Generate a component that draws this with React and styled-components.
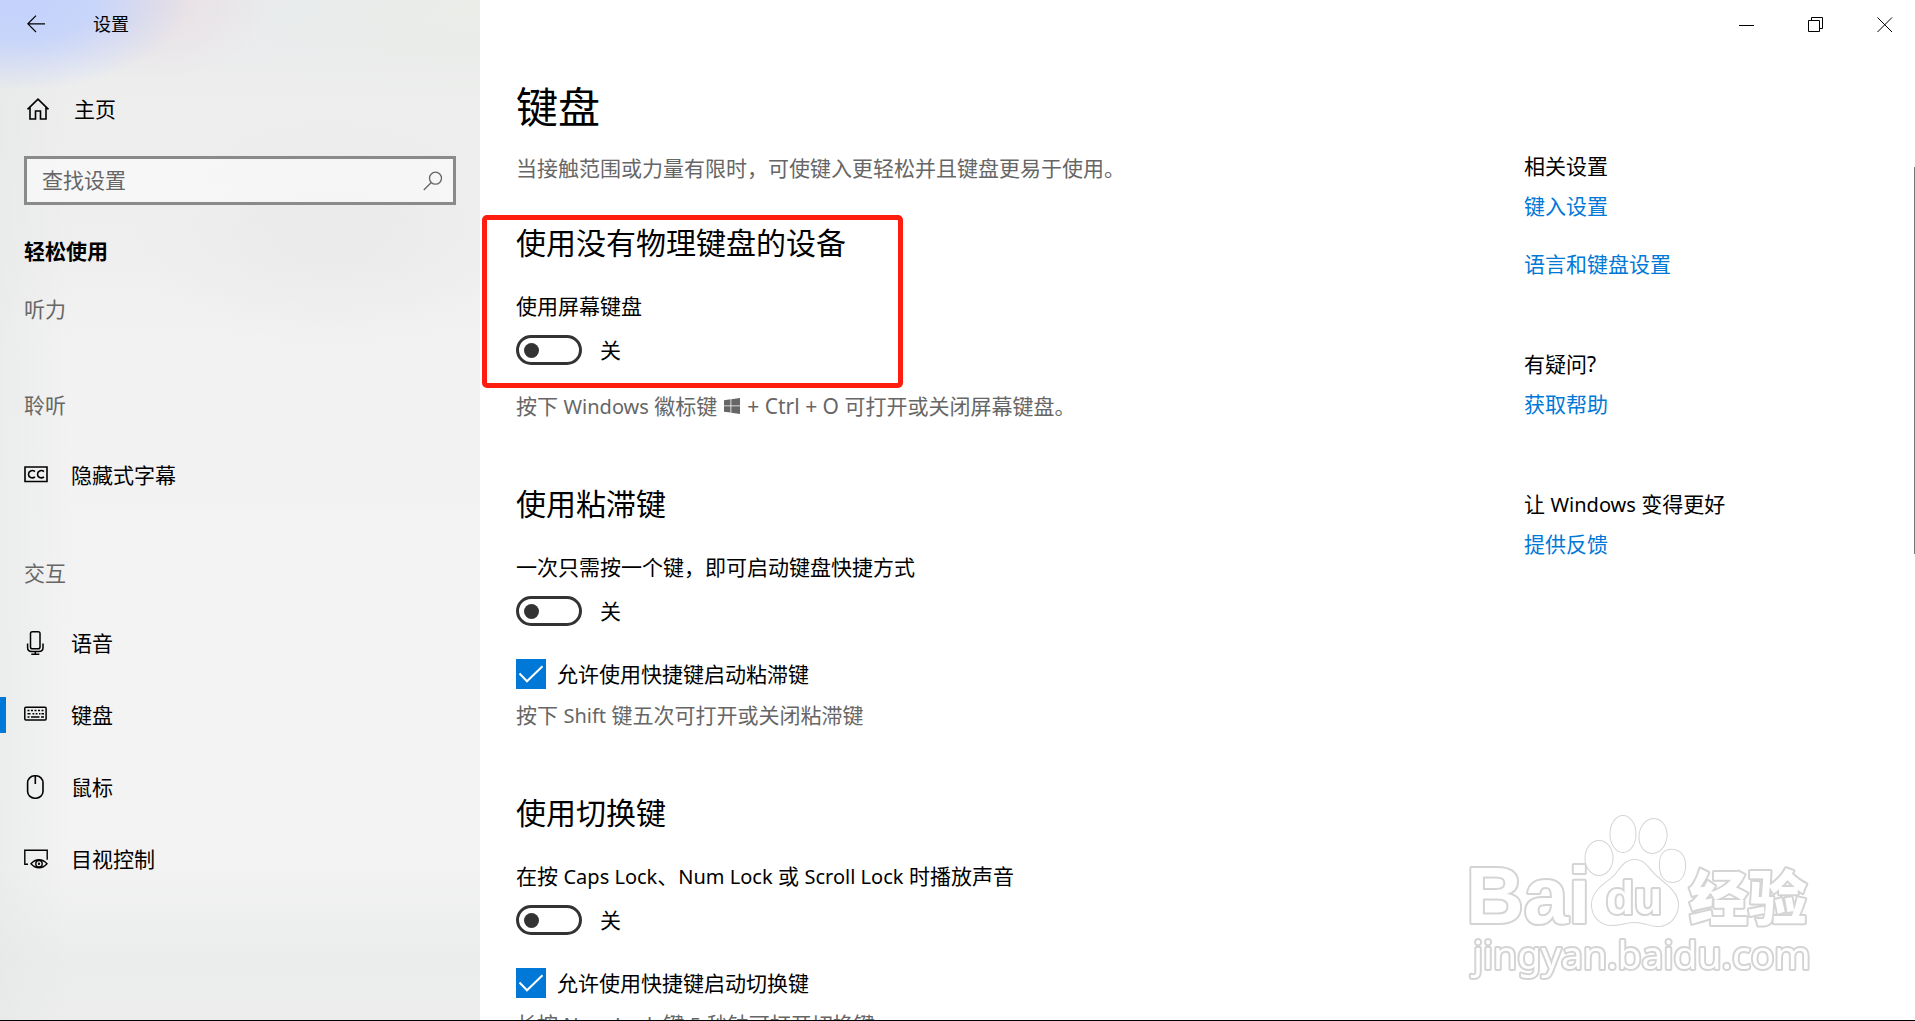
import { useState } from "react"
import styled, { createGlobalStyle } from "styled-components"

const GlobalStyle = createGlobalStyle`
    *, *::before, *::after {
        box-sizing: border-box;
    }
    body {
        margin: 0;
        color: #000;
        background: #fff;
        font-family: "Noto Sans", "Noto Sans CJK SC", sans-serif;
        font-size: 21px;
        line-height: 30px;
    }
    h1, h2, h3, p, ul {
        margin: 0;
        padding: 0;
        font-weight: 400;
    }
    button, input {
        margin: 0;
        padding: 0;
        border: 0;
        background: none;
        color: inherit;
        font: inherit;
    }
`

const Window = styled.div`
    display: flex;
    height: 100vh;
    overflow: hidden;
    border-bottom: 1px solid #000;
`

/* ---- sidebar ---- */

const Sidebar = styled.aside`
    flex: 0 0 480px;
    background:
        radial-gradient(ellipse 170px 90px at 20px 0, #c3d1fc 0%, rgba(197, 211, 251, 0.9) 45%, rgba(214, 222, 246, 0) 100%),
        radial-gradient(ellipse 120px 80px at 150px 0, #e9dfe2 0%, rgba(232, 226, 228, 0) 100%),
        radial-gradient(ellipse 260px 90px at 470px 10px, #eaede8 0%, rgba(234, 237, 232, 0) 100%),
        radial-gradient(ellipse 200px 120px at 330px 230px, #eaeaea 0%, rgba(234, 234, 234, 0) 100%),
        linear-gradient(90deg, rgba(228, 230, 230, 0.5) 0, rgba(240, 240, 240, 0) 70px),
        linear-gradient(180deg, #e8eaee 0, #ededed 90px, #efefef 260px, #f2f2f2 340px, #f3f3f3 860px, #ebecec 960px, #ededed 100%);
`

const SidebarTop = styled.div`
    display: flex;
    align-items: center;
    gap: 48px;
    height: 48px;
    padding-left: 27px;
    font-size: 18px;
`

const IconButton = styled.button`
    display: grid;
    place-items: center;
    flex: none;
`

const HomeButton = styled.button`
    display: flex;
    align-items: center;
    gap: 24px;
    height: 44px;
    margin: 39px 0 25px 26px;
`

const SearchBox = styled.div`
    display: flex;
    align-items: center;
    height: 49px;
    margin: 0 24px;
    padding: 0 10px 0 15px;
    border: 3px solid #8a8a8a;
    background: rgba(255, 255, 255, 0.5);
    color: #666;
`

const SearchInput = styled.input`
    flex: 1;
    min-width: 0;
    padding-bottom: 2px;
    outline: none;
    &::placeholder {
        color: #666;
        opacity: 1;
    }
`

const SidebarTitle = styled.h2`
    margin: 31px 24px 28px;
    font-size: 21px;
    && {
        font-weight: 700;
    }
`

const NavGroups = styled.nav`
    display: flex;
    flex-direction: column;
    gap: 47px;
`

const NavLabel = styled.h3`
    margin: 0 24px 19px;
    color: #666;
    font-size: 21px;
`

const NavList = styled.ul`
    list-style: none;
`

const NavRow = styled.li`
    display: flex;
    align-items: center;
    height: 72px;
    &::before {
        content: "";
        width: 6px;
        height: 36px;
        background: ${(p) => (p.$active ? "#0078d7" : "transparent")};
    }
`

const NavLink = styled.a`
    display: flex;
    align-items: center;
    gap: 23px;
    flex: 1;
    padding-left: 18px;
    color: #000;
    text-decoration: none;
`

/* ---- main part ---- */

const Main = styled.main`
    display: flex;
    flex-direction: column;
    flex: 1;
    min-width: 0;
`

const WindowBar = styled.div`
    display: flex;
    justify-content: flex-end;
    gap: 9px;
    height: 50px;
    flex: none;
`

const WindowButton = styled(IconButton)`
    width: 60px;
    height: 49px;
`

const Content = styled.div`
    display: flex;
    flex: 1;
    min-height: 0;
`

const Article = styled.article`
    flex: 1;
    min-width: 0;
    padding: 29px 0 0 36px;
    overflow: hidden;
`

const PageTitle = styled.h1`
    font-size: 42px;
    line-height: 56px;
`

const Description = styled.p`
    margin: 18px 0 40px;
    color: #666;
`

const Section = styled.section`
    margin-bottom: 63px;
`

const SectionTitle = styled.h2`
    margin-bottom: 28px;
    font-size: 30px;
    line-height: 40px;
`

// red frame drawn round the first switch
const Highlight = styled.div`
    position: relative;
    &::after {
        content: "";
        position: absolute;
        top: -8px;
        bottom: -23px;
        left: -34px;
        width: 421px;
        border: 5px solid #ff1d10;
        border-radius: 5px;
        pointer-events: none;
    }
`

const SwitchLabel = styled.label`
    display: block;
    margin-bottom: 14px;
`

const SwitchRow = styled.div`
    display: flex;
    align-items: center;
    gap: 18px;
    height: 30px;
`

const SwitchInput = styled.input`
    appearance: none;
    display: flex;
    align-items: center;
    width: 66px;
    height: 30px;
    padding: 0 5px;
    border: 3px solid #333;
    border-radius: 15px;
    &::before {
        content: "";
        width: 15px;
        height: 15px;
        border-radius: 50%;
        background: #333;
    }
    &:checked {
        justify-content: flex-end;
        border-color: #0078d7;
        background: #0078d7;
    }
    &:checked::before {
        background: #fff;
    }
`

const CheckRow = styled.label`
    display: flex;
    align-items: center;
    gap: 11px;
    height: 30px;
    margin-top: 33px;
`

const CheckBox = styled.span`
    display: grid;
    > * {
        grid-area: 1 / 1;
    }
    svg {
        pointer-events: none;
    }
`

const CheckInput = styled.input`
    appearance: none;
    width: 30px;
    height: 30px;
    border: 3px solid #333;
    &:checked {
        border-color: #0078d7;
        background: #0078d7;
    }
`

const Hint = styled.p`
    margin-top: ${(p) => (p.$afterCheck ? 11 : 26)}px;
    color: #666;
    svg {
        margin: 0 2px 0 1px;
    }
`

const Latin = styled.span`
    font-size: 20px;
    line-height: 20px;
`

/* ---- right column ---- */

const Related = styled.aside`
    display: flex;
    flex-direction: column;
    gap: 70px;
    flex: 0 0 390px;
    padding-top: 101px;
`

const RelatedGroup = styled.section`
    display: flex;
    flex-direction: column;
    align-items: flex-start;
`

const RelatedTitle = styled.h2`
    margin-bottom: 10px;
    font-size: 21px;
`

const RelatedLink = styled.a`
    color: #0078d7;
    text-decoration: none;
    & + & {
        margin-top: 28px;
    }
`

const ScrollThumb = styled.div`
    flex: 0 0 1px;
    height: 387px;
    margin-top: 117px;
    background: #767676;
`

const Watermark = styled.svg`
    position: fixed;
    right: 95px;
    bottom: 36px;
    pointer-events: none;
`

/* ---- icons ---- */

const Icon = ({ w = 24, h = 24, sw = 2, children }) => (
    <svg width={w} height={h} viewBox={`0 0 ${w} ${h}`} fill="none" stroke="currentColor" strokeWidth={sw} aria-hidden="true">
        {children}
    </svg>
)

const BackIcon = () => (
    <Icon w={18} h={18} sw={1.2}>
        <path d="M9 .7.9 8.8 9 17M1 8.8h17" />
    </Icon>
)

const HomeIcon = () => (
    <Icon sw={1.6}>
        <path d="M1.5 12.3 12 2.2l10.500 10.1M4 10.500v11.500h5.500v-8h5v8H20V10.500" />
    </Icon>
)

const SearchIcon = () => (
    <Icon w={20} h={20} sw={1.3}>
        <circle cx="12.500" cy="7.200" r="6" />
        <path d="M8.300 11.500.8 19" />
    </Icon>
)

const CaptionIcon = () => (
    <Icon sw={1.6}>
        <path d="M1 4h22v14.500H1z" />
        <path d="M11 8.500C8 6.500 4.500 8 4.500 11.200s3.500 4.800 6.500 2.800M20 8.500c-3-2-6.500-.500-6.500 2.700s3.500 4.800 6.500 2.800" />
    </Icon>
)

const MicIcon = () => (
    <Icon sw={1.5}>
        <rect x="6.500" y=".8" width="9.500" height="17" rx="1.800" />
        <path d="M3.600 12.500v4q0 4 4 4h7.400q4 0 4-4v-4M11.300 20.500v3M7.300 23.200h8" />
    </Icon>
)

const KeyboardIcon = () => (
    <Icon sw={1.5}>
        <rect x=".8" y="4.300" width="21.300" height="12.700" rx="1" />
        <path d="M3.500 7.500h17" strokeDasharray="2 1.500" />
        <path d="M3.500 10.700h3M8.500 10.700h1.800M11.700 10.700h1.800M15 10.700h1.500M17.500 10.700h2.500M3.500 14h2M7 14h8.500M17 14h3" />
    </Icon>
)

const MouseIcon = () => (
    <Icon sw={1.6}>
        <rect x="3.600" y=".8" width="15.400" height="22.400" rx="7" />
        <path d="M11.300 1v8" />
    </Icon>
)

const EyeControlIcon = () => (
    <Icon sw={1.4}>
        <path d="M4 17.300H.8V3.300h22.400v9.500" />
        <path d="M7 16.700q3.500-4 8-4t8 4q-3.500 4-8 4t-8-4z" />
        <circle cx="15" cy="16.700" r="3.200" />
        <circle cx="15" cy="16.700" r=".5" />
    </Icon>
)

const WindowsLogo = () => (
    <svg width="16" height="16" viewBox="0 0 16 16" fill="currentColor" role="img" aria-label="Windows">
        <path d="M0 2.200 6.500 1.300v6.200H0zM7.300 1.200 16 0v7.500H7.300zM0 8.300h6.500v6.300L0 13.700zM7.300 8.300H16V16l-8.700-1.300z" />
    </svg>
)

const NAV = [
    { label: "听力", items: [] },
    { label: "聆听", items: [{ name: "隐藏式字幕", Glyph: CaptionIcon }] },
    {
        label: "交互",
        items: [
            { name: "语音", Glyph: MicIcon },
            { name: "键盘", Glyph: KeyboardIcon, active: true },
            { name: "鼠标", Glyph: MouseIcon },
            { name: "目视控制", Glyph: EyeControlIcon },
        ],
    },
]

const RELATED = [
    { title: "相关设置", links: ["键入设置", "语言和键盘设置"] },
    { title: "有疑问?", links: ["获取帮助"] },
    { title: <>让 <Latin>Windows</Latin> 变得更好</>, links: ["提供反馈"] },
]

const Switch = ({ id, label }) => {
    const [on, setOn] = useState(false)
    return (
        <>
            <SwitchLabel htmlFor={id}>{label}</SwitchLabel>
            <SwitchRow>
                <SwitchInput id={id} type="checkbox" role="switch" checked={on} onChange={() => setOn(!on)} />
                <span>{on ? "开" : "关"}</span>
            </SwitchRow>
        </>
    )
}

const Check = ({ label }) => (
    <CheckRow>
        <CheckBox>
            <CheckInput type="checkbox" defaultChecked />
            <svg width="30" height="30" fill="none" stroke="#fff" strokeWidth="2" aria-hidden="true">
                <path d="M3.500 14.500 11 22.300 26.500 7.300" />
            </svg>
        </CheckBox>
        {label}
    </CheckRow>
)

const SiteMark = () => (
    <Watermark width="356" height="180" viewBox="0 0 356 180" fill="#fff" stroke="#d4d4d4" strokeWidth="4" paintOrder="stroke" strokeLinejoin="round">
        <text x="2" y="118" fontFamily="Liberation Sans" fontWeight="700" fontSize="80">Bai</text>
        <g strokeWidth="2">
            <ellipse cx="135" cy="53" rx="13.500" ry="17" />
            <ellipse cx="159" cy="29" rx="12.500" ry="18" />
            <ellipse cx="189" cy="31" rx="13.500" ry="17" transform="rotate(8 189 31)" />
            <path d="M196 57c1-11 8-13 14-12 8 1 12 9 11 18-1 9-5 14-13 14-9 0-13-9-12-20z" />
            <path d="M171 55c-9 0-13 6-19 14s-24 14-24 31c0 12 9 20 20 20 9 0 14-3 23-3s15 4 23 4c12 0 20-10 20-22 0-14-18-23-25-31s-10-13-18-13z" />
        </g>
        <text x="142" y="109" fontFamily="Liberation Sans" fontWeight="700" fontSize="46">du</text>
        <text x="225" y="115" fontFamily="Noto Sans CJK SC" fontWeight="900" fontSize="59">经验</text>
        <text x="9" y="164" fontFamily="Noto Sans" fontSize="39">jingyan.baidu.com</text>
    </Watermark>
)

const App = () => {
    return (
        <Window>
            <GlobalStyle />
            <Sidebar>
                <SidebarTop>
                    <IconButton aria-label="返回"><BackIcon /></IconButton>
                    <span>设置</span>
                </SidebarTop>
                <HomeButton><HomeIcon />主页</HomeButton>
                <SearchBox>
                    <SearchInput type="text" placeholder="查找设置" aria-label="查找设置" />
                    <IconButton aria-label="搜索"><SearchIcon /></IconButton>
                </SearchBox>
                <SidebarTitle>轻松使用</SidebarTitle>
                <NavGroups>
                    {NAV.map(({ label, items }) => (
                        <div key={label}>
                            <NavLabel>{label}</NavLabel>
                            <NavList>
                                {items.map(({ name, Glyph, active }) => (
                                    <NavRow key={name} $active={active}>
                                        <NavLink href="#"><Glyph />{name}</NavLink>
                                    </NavRow>
                                ))}
                            </NavList>
                        </div>
                    ))}
                </NavGroups>
            </Sidebar>

            <Main>
                <WindowBar>
                    <WindowButton aria-label="最小化">
                        <Icon w={16} h={16} sw={1}><path d="M0 8.500h15" /></Icon>
                    </WindowButton>
                    <WindowButton aria-label="还原">
                        <Icon w={16} h={16} sw={1}><path d="M.5 3.500h11v11H.500zM3.500 3.500v-3h11v11h-3" /></Icon>
                    </WindowButton>
                    <WindowButton aria-label="关闭">
                        <Icon w={16} h={16} sw={1}><path d="m.5.5 14.500 14.500M15 .5.5 15" /></Icon>
                    </WindowButton>
                </WindowBar>
                <Content>
                    <Article>
                        <PageTitle>键盘</PageTitle>
                        <Description>当接触范围或力量有限时，可使键入更轻松并且键盘更易于使用。</Description>

                        <Section>
                            <Highlight>
                                <SectionTitle>使用没有物理键盘的设备</SectionTitle>
                                <Switch id="osk" label="使用屏幕键盘" />
                            </Highlight>
                            <Hint>
                                按下 <Latin>Windows</Latin> 徽标键 <WindowsLogo /> + Ctrl + O 可打开或关闭屏幕键盘。
                            </Hint>
                        </Section>

                        <Section>
                            <SectionTitle>使用粘滞键</SectionTitle>
                            <Switch id="sticky" label="一次只需按一个键，即可启动键盘快捷方式" />
                            <Check label="允许使用快捷键启动粘滞键" />
                            <Hint $afterCheck>按下 <Latin>Shift</Latin> 键五次可打开或关闭粘滞键</Hint>
                        </Section>

                        <Section>
                            <SectionTitle>使用切换键</SectionTitle>
                            <Switch
                                id="toggle"
                                label={<>在按 <Latin>Caps Lock</Latin>、<Latin>Num Lock</Latin> 或 <Latin>Scroll Lock</Latin> 时播放声音</>}
                            />
                            <Check label="允许使用快捷键启动切换键" />
                            <Hint $afterCheck>长按 <Latin>Num Lock</Latin> 键 <Latin>5</Latin> 秒钟可打开切换键</Hint>
                        </Section>
                    </Article>

                    <Related>
                        {RELATED.map(({ title, links }) => (
                            <RelatedGroup key={links[0]}>
                                <RelatedTitle>{title}</RelatedTitle>
                                {links.map((text) => (
                                    <RelatedLink key={text} href="#">{text}</RelatedLink>
                                ))}
                            </RelatedGroup>
                        ))}
                    </Related>
                    <ScrollThumb />
                </Content>
            </Main>
            <SiteMark />
        </Window>
    )
}

export default App
